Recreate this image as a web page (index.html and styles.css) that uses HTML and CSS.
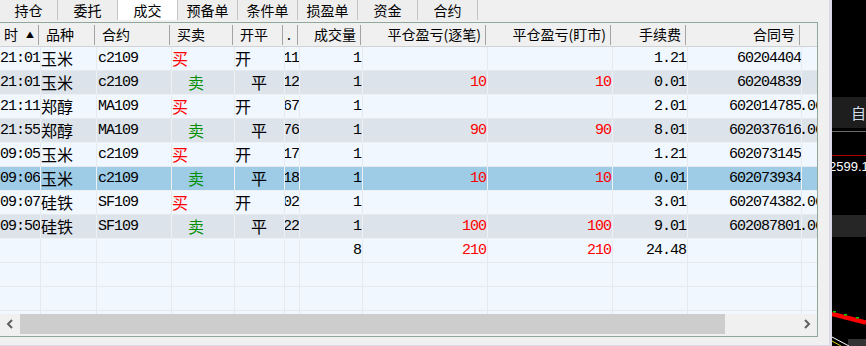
FILE: index.html
```html
<!DOCTYPE html>
<html lang="zh-CN">
<head>
  <meta charset="UTF-8" />
  <title>成交</title>
  <link rel="stylesheet" href="styles.css">
</head>
<body>
  <div class="app">
    <div class="panel">
      <div class="tabs">
        <div class="tab first">持仓</div>
        <div class="tab">委托</div>
        <div class="tab active">成交</div>
        <div class="tab">预备单</div>
        <div class="tab">条件单</div>
        <div class="tab">损盈单</div>
        <div class="tab">资金</div>
        <div class="tab">合约</div>
      </div>

      <div class="grid">
        <div class="grid-body">
          <div class="row head">
            <div class="c h-time">时<span class="sort">▲</span></div>
            <div class="c h-left">品种</div>
            <div class="c h-left">合约</div>
            <div class="c h-left">买卖</div>
            <div class="c h-left">开平</div>
            <div class="c h-dot">.</div>
            <div class="c h-right">成交量</div>
            <div class="c h-right">平仓盈亏(逐笔)</div>
            <div class="c h-right">平仓盈亏(盯市)</div>
            <div class="c h-right">手续费</div>
            <div class="c h-right">合同号</div>
            <div class="c last"></div>
          </div>

          <div class="row odd">
            <div class="c mono">21:01</div>
            <div class="c cn">玉米</div>
            <div class="c mono code">c2109</div>
            <div class="c cn red">买</div>
            <div class="c cn">开</div>
            <div class="c mono sec"><span>11</span></div>
            <div class="c mono num">1</div>
            <div class="c mono num red"></div>
            <div class="c mono num red"></div>
            <div class="c mono num">1.21</div>
            <div class="c mono num id">60204404</div>
            <div class="c mono last"></div>
          </div>
          <div class="row even">
            <div class="c mono">21:01</div>
            <div class="c cn">玉米</div>
            <div class="c mono code">c2109</div>
            <div class="c cn green indent">卖</div>
            <div class="c cn indent">平</div>
            <div class="c mono sec"><span>12</span></div>
            <div class="c mono num">1</div>
            <div class="c mono num red">10</div>
            <div class="c mono num red">10</div>
            <div class="c mono num">0.01</div>
            <div class="c mono num id">60204839</div>
            <div class="c mono last"></div>
          </div>
          <div class="row odd">
            <div class="c mono">21:11</div>
            <div class="c cn">郑醇</div>
            <div class="c mono code">MA109</div>
            <div class="c cn red">买</div>
            <div class="c cn">开</div>
            <div class="c mono sec"><span>67</span></div>
            <div class="c mono num">1</div>
            <div class="c mono num red"></div>
            <div class="c mono num red"></div>
            <div class="c mono num">2.01</div>
            <div class="c mono num id">602014785</div>
            <div class="c mono last">.06</div>
          </div>
          <div class="row even">
            <div class="c mono">21:55</div>
            <div class="c cn">郑醇</div>
            <div class="c mono code">MA109</div>
            <div class="c cn green indent">卖</div>
            <div class="c cn indent">平</div>
            <div class="c mono sec"><span>76</span></div>
            <div class="c mono num">1</div>
            <div class="c mono num red">90</div>
            <div class="c mono num red">90</div>
            <div class="c mono num">8.01</div>
            <div class="c mono num id">602037616</div>
            <div class="c mono last">.06</div>
          </div>
          <div class="row odd">
            <div class="c mono">09:05</div>
            <div class="c cn">玉米</div>
            <div class="c mono code">c2109</div>
            <div class="c cn red">买</div>
            <div class="c cn">开</div>
            <div class="c mono sec"><span>17</span></div>
            <div class="c mono num">1</div>
            <div class="c mono num red"></div>
            <div class="c mono num red"></div>
            <div class="c mono num">1.21</div>
            <div class="c mono num id">602073145</div>
            <div class="c mono last"></div>
          </div>
          <div class="row selected">
            <div class="c mono">09:06</div>
            <div class="c cn">玉米</div>
            <div class="c mono code">c2109</div>
            <div class="c cn green indent">卖</div>
            <div class="c cn indent">平</div>
            <div class="c mono sec"><span>18</span></div>
            <div class="c mono num">1</div>
            <div class="c mono num red">10</div>
            <div class="c mono num red">10</div>
            <div class="c mono num">0.01</div>
            <div class="c mono num id">602073934</div>
            <div class="c mono last"></div>
          </div>
          <div class="row odd">
            <div class="c mono">09:07</div>
            <div class="c cn">硅铁</div>
            <div class="c mono code">SF109</div>
            <div class="c cn red">买</div>
            <div class="c cn">开</div>
            <div class="c mono sec"><span>02</span></div>
            <div class="c mono num">1</div>
            <div class="c mono num red"></div>
            <div class="c mono num red"></div>
            <div class="c mono num">3.01</div>
            <div class="c mono num id">602074382</div>
            <div class="c mono last">.06</div>
          </div>
          <div class="row even">
            <div class="c mono">09:50</div>
            <div class="c cn">硅铁</div>
            <div class="c mono code">SF109</div>
            <div class="c cn green indent">卖</div>
            <div class="c cn indent">平</div>
            <div class="c mono sec"><span>22</span></div>
            <div class="c mono num">1</div>
            <div class="c mono num red">100</div>
            <div class="c mono num red">100</div>
            <div class="c mono num">9.01</div>
            <div class="c mono num id">602087801</div>
            <div class="c mono last">.06</div>
          </div>

          <!-- totals -->
          <div class="row odd">
            <div class="c mono"></div>
            <div class="c cn"></div>
            <div class="c mono"></div>
            <div class="c cn"></div>
            <div class="c cn"></div>
            <div class="c mono sec"></div>
            <div class="c mono num">8</div>
            <div class="c mono num red">210</div>
            <div class="c mono num red">210</div>
            <div class="c mono num">24.48</div>
            <div class="c mono num id"></div>
            <div class="c mono last"></div>
          </div>

          <div class="row odd">
            <div class="c"></div><div class="c"></div><div class="c"></div><div class="c"></div>
            <div class="c"></div><div class="c"></div><div class="c"></div><div class="c"></div>
            <div class="c"></div><div class="c"></div><div class="c"></div><div class="c last"></div>
          </div>
          <div class="row odd">
            <div class="c"></div><div class="c"></div><div class="c"></div><div class="c"></div>
            <div class="c"></div><div class="c"></div><div class="c"></div><div class="c"></div>
            <div class="c"></div><div class="c"></div><div class="c"></div><div class="c last"></div>
          </div>
          <div class="row odd">
            <div class="c"></div><div class="c"></div><div class="c"></div><div class="c"></div>
            <div class="c"></div><div class="c"></div><div class="c"></div><div class="c"></div>
            <div class="c"></div><div class="c"></div><div class="c"></div><div class="c last"></div>
          </div>
        </div>

        <div class="hscroll">
          <div class="sb-btn">
            <svg width="8" height="10" viewBox="0 0 8 10"><path d="M6 1 L2 5 L6 9" fill="none" stroke="#606060" stroke-width="2"/></svg>
          </div>
          <div class="sb-thumb"></div>
          <div class="sb-track"></div>
          <div class="sb-btn">
            <svg width="8" height="10" viewBox="0 0 8 10"><path d="M2 1 L6 5 L2 9" fill="none" stroke="#606060" stroke-width="2"/></svg>
          </div>
        </div>
      </div>
    </div>

    <div class="chart">
      <svg width="34" height="346" viewBox="0 0 34 346">
        <rect x="0" y="97" width="34" height="31" fill="#1e1e1e"/>
        <text x="19" y="119" fill="#d2dcea" font-size="15" font-family="Noto Sans CJK SC, sans-serif">自</text>
        <line x1="0" y1="131.5" x2="34" y2="131.5" stroke="#6a6a6a"/>
        <line x1="0" y1="155.5" x2="34" y2="155.5" stroke="#b40000"/>
        <text x="-3" y="171" fill="#ffffff" font-size="13" font-family="Liberation Sans, sans-serif">2599.1</text>
        <rect x="0" y="215" width="34" height="22" fill="#262626"/>
        <line x1="0" y1="314" x2="34" y2="322.5" stroke="#ff0000" stroke-width="4.5"/>
        <rect x="1" y="311" width="3" height="1.5" fill="#00d000"/>
        <rect x="12" y="314" width="3" height="1.5" fill="#00d000"/>
        <rect x="24" y="317" width="3" height="1.5" fill="#00d000"/>
        <rect x="16" y="339" width="18" height="7" fill="#333333"/>
        <line x1="0" y1="337" x2="17" y2="346" stroke="#ffffff" stroke-width="1"/>
        <line x1="0" y1="341" x2="9" y2="346" stroke="#e0d000" stroke-width="1"/>
      </svg>
    </div>
  </div>
</body>
</html>
```

FILE: styles.css
```css
* {
  margin: 0; padding: 0; box-sizing: border-box;
}
body {
  width: 866px;
  height: 346px;
  overflow: hidden;
  background: #000;
  font-family: "Noto Sans CJK SC", sans-serif;
  color: #000;
}
.app {
  display: flex;
  height: 346px;
}
.panel {
  width: 832px;
  height: 346px;
  background: #f0f0f0;
  border-right: 3px solid #d9d9e8;
  border-bottom: 1px solid #d9d9e8;
  display: flex;
  flex-direction: column;
}

/* tabs */
.tabs {
  display: flex;
  height: 20px;
  font-size: 14px;
}
.tab {
  width: 60px;
  line-height: 20px;
  text-align: center;
  border-right: 1px solid #c4c4c4;
  background: #eeeeee;
}
.tab.first { width: 58px; }
.tab.active { background: #ffffff; }

/* grid */
.grid {
  margin-top: 2px;
  width: 818px;
  border-top: 1px solid #8fa89a;
  border-right: 1px solid #8fa89a;
  border-bottom: 1px solid #8fa89a;
}
.grid-body {
  height: 291px;
  overflow: hidden;
  background: #f0f7ff;
}
.row {
  display: grid;
  grid-template-columns: 41px 56px 75px 63px 50px 15px 63px 125px 125px 75px 114px 15px;
  height: 24px;
  border-bottom: 1px solid #e6e9ed;
}
.row.odd { background: #f0f7ff; }
.row.even { background: #dde3ea; }
.row.selected { background: #9ecbe5; }
.row.even, .row.selected { border-bottom-color: #eef1f4; }

.c {
  border-right: 1px solid #e6e9ed;
  white-space: nowrap;
  overflow: hidden;
  line-height: 23px;
}
.row.even .c, .row.selected .c { border-right-color: #eef1f4; }
.c.last { border-right: none; }

.row.head {
  background: #f0f0f0;
  border-bottom: 1px solid #d2d2d2;
  font-size: 14px;
}
.row.head .c {
  border-right: none;
  background: linear-gradient(#a3a3a3, #a3a3a3) right 2px top 2px / 1px 20px no-repeat;
}
.row.head .c.last { background: none; }
.h-time { padding-left: 4px; }
.sort {
  font-size: 8px;
  margin-left: 8px;
  vertical-align: 2px;
}
.h-left { padding-left: 5px; }
.h-dot { padding-left: 2px; }
.h-right { text-align: right; padding-right: 7px; }

.mono {
  font-family: "Liberation Mono", monospace;
  font-size: 15px;
  letter-spacing: -1px;
}
.cn {
  font-family: "Noto Sans CJK SC", sans-serif;
  font-size: 16px;
}
.code { padding-left: 1px; }
.indent { padding-left: 16px; }
.num { text-align: right; padding-right: 1px; }
.num.id { padding-right: 0; }
.c.last.mono { text-indent: -3px; }
.sec {
  display: flex;
  justify-content: flex-end;
}
.red { color: #ff0000; }
.green { color: #009000; }

/* scrollbar */
.hscroll {
  display: flex;
  height: 22px;
  padding-bottom: 2px;
  background: #f0f0f0;
}
.sb-btn {
  width: 20px;
  display: flex;
  align-items: center;
  justify-content: center;
}
.sb-thumb {
  width: 705px;
  background: #cdcdcd;
}
.sb-track { flex: 1; }

/* chart strip */
.chart {
  width: 34px;
  height: 346px;
  background: #000;
}
.chart svg { display: block; }
```
